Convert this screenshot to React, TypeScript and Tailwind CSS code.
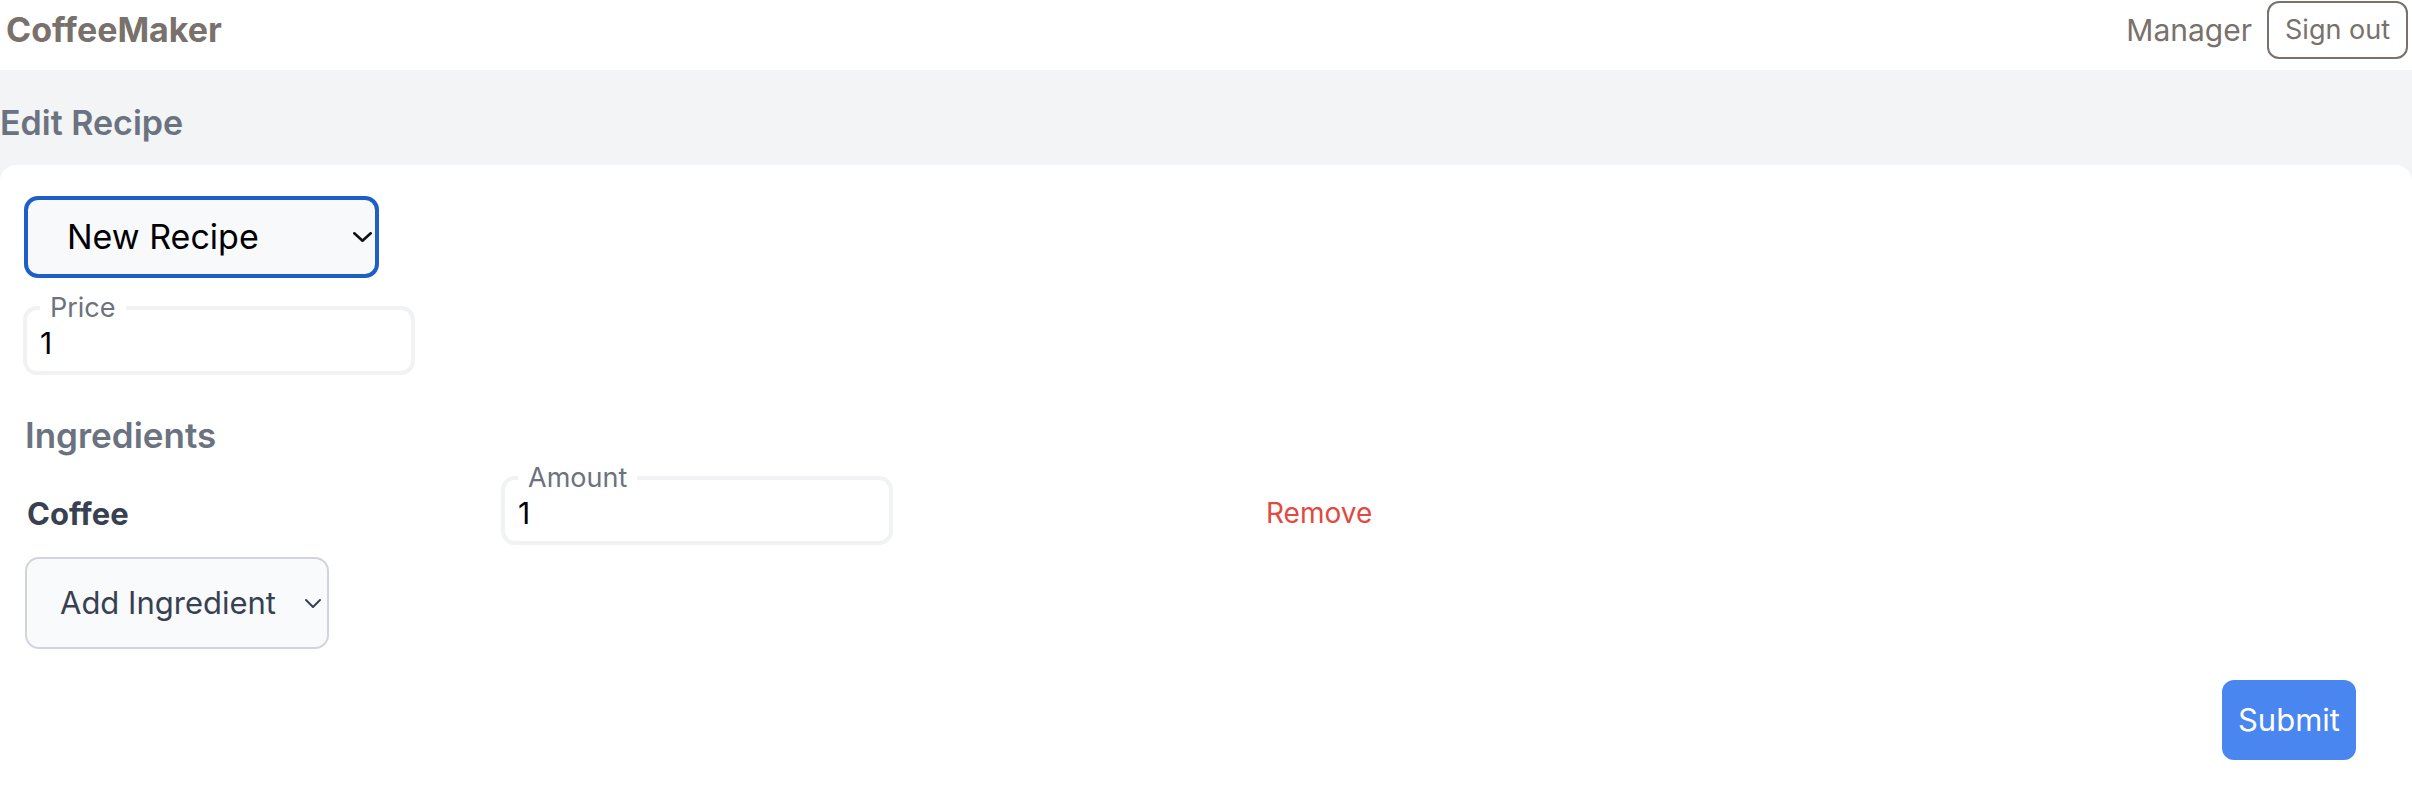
import React from "react";

function Chevron({ w, h, color, stroke }: { w: number; h: number; color: string; stroke: number }) {
  return (
    <svg width={w} height={h} viewBox={`0 0 ${w} ${h}`} fill="none">
      <path
        d={`M${stroke / 2} ${stroke / 2} L${w / 2} ${h - stroke / 2} L${w - stroke / 2} ${stroke / 2}`}
        stroke={color}
        strokeWidth={stroke}
        strokeLinecap="round"
        strokeLinejoin="round"
      />
    </svg>
  );
}

function LegendField({ label, value, width }: { label: string; value: string; width: number }) {
  return (
    <fieldset
      className="m-0 border-4 border-[#f1f2f4] rounded-[14px] px-[13px] pt-0 pb-[8px]"
      style={{ width }}
    >
      <legend className="px-[10px] text-[27px] leading-[34px] text-[#6b7280]">{label}</legend>
      <input
        readOnly
        value={value}
        className="block w-full -mt-[2px] h-[40px] bg-transparent px-0 text-[30px] leading-[40px] text-black outline-none"
        style={{ fontFamily: "Inter, 'Noto Sans', sans-serif" }}
      />
    </fieldset>
  );
}

export default function App() {
  return (
    <div
      className="w-[2412px] h-[798px] bg-white overflow-hidden"
      style={{ fontFamily: "Inter, 'Noto Sans', 'Liberation Sans', sans-serif" }}
    >
      {/* Header */}
      <header className="h-[70px] pb-[10px]">
        <div className="h-[60px] flex items-center justify-between pl-[6px] pr-[4px]">
          <div className="text-[34px] leading-[40px] font-bold text-[#78716c]">CoffeeMaker</div>
          <div className="flex items-center gap-[15px]">
            <span className="text-[30px] leading-[40px] text-[#78716c]">Manager</span>
            <button className="h-[58px] px-[16px] border-2 border-[#78716c] rounded-[12px] text-[27px] leading-[34px] text-[#78716c]">
              Sign out
            </button>
          </div>
        </div>
      </header>

      {/* Title band */}
      <div className="bg-[#f3f4f6]">
        <h1 className="pt-[29px] pb-[18px] text-[34px] leading-[48px] font-semibold text-[#6b7280]">
          Edit Recipe
        </h1>
        <div className="bg-white rounded-t-[16px] px-[24px] pt-[31px] pb-[39px]">
          {/* Recipe select */}
          <div className="w-[355px] h-[82px] flex items-center justify-between pl-[39px] pr-[3px] border-4 border-[#1d5fc7] rounded-[14px] bg-[#f8f9fb]">
            <span className="text-[34px] leading-[44px] text-black">New Recipe</span>
            <Chevron w={19} h={10} color="#111111" stroke={2.6} />
          </div>

          {/* Price */}
          <div className="mt-[13px] -ml-[1px]">
            <LegendField label="Price" value="1" width={392} />
          </div>

          {/* Ingredients */}
          <h2 className="mt-[36px] ml-[1px] text-[35px] leading-[48px] font-semibold text-[#6b7280]">Ingredients</h2>

          <div className="flex items-start mt-[2px]">
            <div className="w-[477px] mt-[33px] pl-[3px] text-[31px] leading-[40px] font-bold text-[#374151]">Coffee</div>
            <div className="w-[765px]">
              <LegendField label="Amount" value="1" width={392} />
            </div>
            <button className="mt-[35px] text-[28px] leading-[34px] text-[#e04a3f]">Remove</button>
          </div>

          {/* Add ingredient select */}
          <div className="mt-[12px] ml-[1px] w-[304px] h-[92px] flex items-center justify-between pl-[33px] pr-[6px] border-2 border-[#d1d5db] rounded-[14px] bg-[#f9fafb]">
            <span className="text-[31px] leading-[40px] text-[#374151]">Add Ingredient</span>
            <Chevron w={16} h={9} color="#374151" stroke={2} />
          </div>

          {/* Submit */}
          <div className="flex justify-end pr-[32px] mt-[31px]">
            <button className="w-[134px] h-[80px] rounded-[12px] bg-[#4a86ef] text-white text-[31px] leading-[40px]">
              Submit
            </button>
          </div>
        </div>
      </div>
    </div>
  );
}
